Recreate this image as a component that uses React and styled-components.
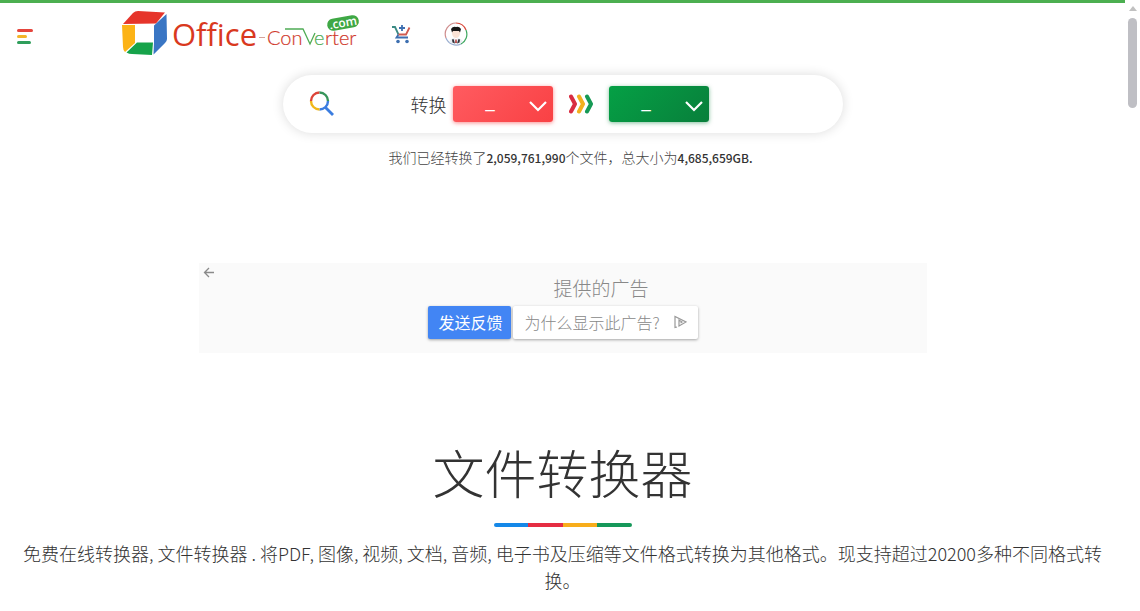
import styled, { createGlobalStyle } from "styled-components"

const GlobalStyle = createGlobalStyle`
* {
    box-sizing: border-box;
}
body {
    margin: 0;
    background: #fff;
    color: #333;
    font-family: "Noto Sans CJK SC", sans-serif;
    font-weight: 300;
}
`

const Page = styled.div`
display: flex;
height: 100vh;
overflow: hidden;
`

const Content = styled.div`
flex: 1;
min-width: 0;
overflow: hidden;
border-top: 3px solid #4caf50;
`

const ScrollTrack = styled.div`
width: 15px;
padding: 6px 0 0;
display: flex;
flex-direction: column;
align-items: center;
gap: 7px;
`

const ScrollArrow = styled.div`
border: 4px solid transparent;
border-top: 0;
border-bottom: 5px solid #c1c1c1;
`

const ScrollThumb = styled.div`
width: 9px;
height: 90px;
border-radius: 5px;
background: #bfbfc4;
`

const Header = styled.header`
height: 62px;
padding-left: 17px;
display: flex;
align-items: center;
`

const MenuButton = styled.button`
width: 16px;
padding: 0;
margin: 4px 89px 0 0;
border: 0;
background: none;
display: flex;
flex-direction: column;
gap: 3px;
`

const MenuLine = styled.span`
width: ${(props) => props.$width};
height: 3px;
border-radius: 2px;
background: ${(props) => props.$color};
`

const LogoLink = styled.a`
display: flex;
margin-right: 32px;
`

const HeaderLink = styled.a`
display: flex;
margin-right: 32px;
`

const SearchBar = styled.form`
width: 560px;
max-width: 100%;
height: 58px;
margin: 10px auto 0;
padding-left: 26px;
border-radius: 29px;
background: #fff;
box-shadow: 0 0 12px rgba(0, 0, 0, 0.14);
display: flex;
align-items: center;
`

const SearchButton = styled.button`
padding: 0;
border: 0;
background: none;
display: flex;
margin-right: 76px;
`

const ConvertLabel = styled.label`
font-size: 18px;
line-height: 26px;
margin-right: 6px;
`

const SelectBox = styled.div`
position: relative;
width: 100px;
height: 36px;
border-radius: 3px;
background: ${(props) => props.$background};
box-shadow: 0 1px 4px ${(props) => props.$shadow};

svg {
    position: absolute;
    right: 6px;
    top: 14px;
    pointer-events: none;
}
`

const Select = styled.select`
appearance: none;
width: 100%;
height: 100%;
padding: 0 25px 6px 0;
border: 0;
background: transparent;
color: #fff;
font-family: "Noto Sans CJK SC", sans-serif;
font-weight: 500;
font-size: 18px;
text-align: center;
text-align-last: center;
`

const Arrows = styled.svg`
margin: 0 16px;
`

const Stats = styled.p`
margin: 14px 0 0;
padding-left: 16px;
font-size: 14px;
line-height: 20px;
text-align: center;
color: #444;

b {
    font-size: 12px;
    font-weight: 500;
    color: #333;
}
`

const AdBox = styled.aside`
width: 728px;
max-width: 100%;
height: 90px;
margin: 95px auto 0;
padding: 4px;
background: #fafafa;
display: flex;
align-items: flex-start;
`

const BackButton = styled.button`
padding: 0;
border: 0;
background: none;
display: flex;
`

const AdBody = styled.div`
flex: 1;
display: flex;
flex-direction: column;
align-items: center;
`

const AdTitle = styled.div`
margin: 7px 0 4px 64px;
font-size: 19px;
line-height: 28px;
color: #888;
`

const AdActions = styled.div`
display: flex;
gap: 2px;
padding-right: 12px;
`

const AdButton = styled.button`
height: 33px;
padding: ${(props) => (props.$primary ? "0 9px 2px 10px" : "0 11px 2px")};
border: 0;
border-radius: 2px;
background: ${(props) => (props.$primary ? "#4285f4" : "#fff")};
color: ${(props) => (props.$primary ? "#fff" : "#888")};
box-shadow: 0 1px 3px rgba(0, 0, 0, 0.35);
font-family: "Noto Sans CJK SC", sans-serif;
font-weight: ${(props) => (props.$primary ? 400 : 300)};
font-size: 16px;
line-height: 24px;
display: flex;
align-items: center;
gap: 13px;
`

const Title = styled.h1`
margin: 81px 0 0;
font-size: 52px;
line-height: 76px;
font-weight: 300;
text-align: center;
`

const Divider = styled.div`
width: 138px;
height: 4px;
margin: 13px auto 0;
border-radius: 2px;
background: linear-gradient(90deg, #1588e8 25%, #e52d42 25% 50%, #f8ad1b 50% 75%, #16985a 75%);
`

const Intro = styled.p`
margin: 13px 0 0;
padding: 0 20px;
font-size: 18px;
line-height: 27px;
text-align: center;
`

function Logo() {
    return (
        <svg width="238" height="48" viewBox="0 0 238 48" role="img" aria-label="Office-Converter.com">
            <path d="M1 14 L11 3 Q13 1 16 1 L43 2.500 L34 13.500 Z" fill="#e6352b" />
            <path d="M0 15 L13 15 L13 33 L3 42 Q1 40 1 37 Z" fill="#fcb316" />
            <path d="M44.500 4 L45 29 Q45 31 43 33 L31.500 44.500 L32 32 L32 15.500 Z" fill="#3a76c4" />
            <path d="M15 32.500 L31 32.500 L30 45 L10 44 Q7 44 4.500 42.500 Z" fill="#16a34a" />
            <text x="50" y="36" fontFamily="Open Sans" fontWeight="400" fontSize="31" fill="#d9391e">Office</text>
            <path d="M137 27.500 H143" stroke="#d5a29a" />
            <text x="145" y="35" fontFamily="Lato" fontWeight="300" fontSize="20" fill="#d0392b" stroke="#d0392b" strokeWidth="0.200">Con</text>
            <path d="M163 19 H181 L188 34 L193 23" fill="none" stroke="#4fac55" strokeWidth="1.300" />
            <text x="192" y="35" fontFamily="Lato" fontWeight="300" fontSize="20" fill="#4fac55" stroke="#4fac55" strokeWidth="0.200">e</text>
            <text x="203" y="35" fontFamily="Lato" fontWeight="300" fontSize="20" fill="#d0392b" stroke="#d0392b" strokeWidth="0.200">rter</text>
            <g transform="rotate(-10 221 13)">
                <rect x="205" y="7" width="32" height="12" rx="6" fill="#3fa845" />
                <text x="221" y="17" textAnchor="middle" fontFamily="Open Sans" fontWeight="600" fontSize="12" fill="#fff">.com</text>
            </g>
        </svg>
    )
}

function CartIcon() {
    return (
        <svg width="20" height="22" viewBox="0 0 20 22" fill="none" strokeWidth="1.800">
            <path d="M0 4 H3 L6.500 11.500" stroke="#3b8a83" />
            <path d="M6.500 11.500 L4.500 14.500 H16" stroke="#3d6fb0" />
            <path d="M6.500 11.500 H14 L17.500 4.500" stroke="#cf5a50" />
            <path d="M10 2 V8 M7 5 H13" stroke="#3d6fb0" />
            <circle cx="6" cy="18.500" r="1.800" fill="#3d6fb0" />
            <circle cx="15" cy="18.500" r="1.800" fill="#3d6fb0" />
        </svg>
    )
}

function AvatarIcon() {
    return (
        <svg width="24" height="24" viewBox="0 0 24 24">
            <g fill="none" strokeWidth="1.200">
                <path d="M12 1 A11 11 0 0 1 22 8" stroke="#d9483b" />
                <path d="M22 8 A11 11 0 0 1 17 22" stroke="#3fa860" />
                <path d="M17 22 A11 11 0 0 1 2 16" stroke="#9aaed0" />
                <path d="M2 16 A11 11 0 0 1 12 1" stroke="#cf8d8d" />
            </g>
            <path d="M8 9 Q12 6 16 9 V12 Q15 16 12 16 Q9 16 8 12 Z" fill="#fbe3d6" />
            <path d="M8 10.500 L7 7 Q9 4 12 5 Q15 4 17 7 L16 10.500 L15 9 H9 Z" fill="#191717" />
            <path d="M5 20 Q6 17 10 16 L12 18 L14 16 Q18 17 19 20 Q12 24 5 20 Z" fill="#e9edf2" />
            <path d="M8 17.500 L9.500 17 L11 21.500 L8.500 20.500 Z M16 17.500 L14.500 17 L13 21.500 L15.500 20.500 Z" fill="#30323a" />
            <path d="M11.300 17.500 H12.700 L13 21 H11 Z" fill="#b84848" />
        </svg>
    )
}

function SearchIcon() {
    return (
        <svg width="26" height="26" viewBox="0 0 26 26" fill="none" strokeWidth="2.400">
            <path d="M2 10 A8.500 8.500 0 0 1 10.500 1.500" stroke="#dd4438" />
            <path d="M10.500 1.500 A8.500 8.500 0 0 1 19 10" stroke="#36955a" />
            <path d="M19 10 A8.500 8.500 0 0 1 10.500 18.500" stroke="#3b7de0" />
            <path d="M10.500 18.500 A8.500 8.500 0 0 1 2 10" stroke="#f1b819" />
            <path d="M16.500 16.500 L24 24" stroke="#3b7de0" strokeWidth="2.800" />
        </svg>
    )
}

function FormatSelect({ id, name, background, shadow }) {
    return (
        <SelectBox $background={background} $shadow={shadow}>
            <Select id={id} aria-label={name} defaultValue="_">
                <option value="_">_</option>
            </Select>
            <svg width="18" height="12" viewBox="0 0 18 12" fill="none" stroke="#fff" strokeWidth="2.200">
                <path d="M1 2 L9 10 L17 2" />
            </svg>
        </SelectBox>
    )
}

export default function App() {
    return (
        <Page>
            <GlobalStyle />
            <Content>
                <Header>
                    <MenuButton aria-label="菜单">
                        <MenuLine $width="16px" $color="#e5453d" />
                        <MenuLine $width="10px" $color="#f4b429" />
                        <MenuLine $width="14px" $color="#2f9e5b" />
                    </MenuButton>
                    <LogoLink href="#"><Logo /></LogoLink>
                    <HeaderLink href="#" aria-label="购物车"><CartIcon /></HeaderLink>
                    <HeaderLink href="#" aria-label="账户"><AvatarIcon /></HeaderLink>
                </Header>

                <SearchBar>
                    <SearchButton type="button" aria-label="搜索"><SearchIcon /></SearchButton>
                    <ConvertLabel htmlFor="from">转换</ConvertLabel>
                    <FormatSelect
                        id="from"
                        background="linear-gradient(135deg, #ff5b60, #f94144)"
                        shadow="rgba(249, 65, 68, 0.6)"
                    />
                    <Arrows width="24" height="20" viewBox="0 0 24 20" fill="none" strokeWidth="4" strokeLinejoin="round" strokeLinecap="round">
                        <path d="M2 2.500 L6 10 L2 17.500" stroke="#d92d42" />
                        <path d="M10 2.500 L14 10 L10 17.500" stroke="#f2b01e" />
                        <path d="M18 2.500 L22 10 L18 17.500" stroke="#169a55" />
                    </Arrows>
                    <FormatSelect
                        id="to"
                        name="目标格式"
                        background="linear-gradient(135deg, #05a045, #087f3b)"
                        shadow="rgba(8, 127, 59, 0.5)"
                    />
                </SearchBar>

                <Stats>我们已经转换了<b>2,059,761,990</b>个文件，总大小为<b>4,685,659GB.</b></Stats>

                <AdBox>
                    <BackButton aria-label="返回">
                        <svg width="13" height="11" viewBox="0 0 13 11" fill="none" stroke="#8a8a8a" strokeWidth="1.300">
                            <path d="M11 5.500 H1.500 M6 1 L1.500 5.500 L6 10" />
                        </svg>
                    </BackButton>
                    <AdBody>
                        <AdTitle>提供的广告</AdTitle>
                        <AdActions>
                            <AdButton $primary>发送反馈</AdButton>
                            <AdButton>
                                为什么显示此广告?
                                <svg width="14" height="14" viewBox="0 0 14 14" fill="none" stroke="#999" strokeWidth="1.200">
                                    <path d="M4 12 L2 12.500 V1.500 L13 7 L6 11 V5 L9 7 L7.500 8" />
                                </svg>
                            </AdButton>
                        </AdActions>
                    </AdBody>
                </AdBox>

                <Title>文件转换器</Title>
                <Divider />
                <Intro>
                    免费在线转换器, 文件转换器 . 将PDF, 图像, 视频, 文档, 音频, 电子书及压缩等文件格式转换为其他格式。现支持超过20200多种不同格式转换。
                </Intro>
            </Content>
            <ScrollTrack>
                <ScrollArrow />
                <ScrollThumb />
            </ScrollTrack>
        </Page>
    )
}
